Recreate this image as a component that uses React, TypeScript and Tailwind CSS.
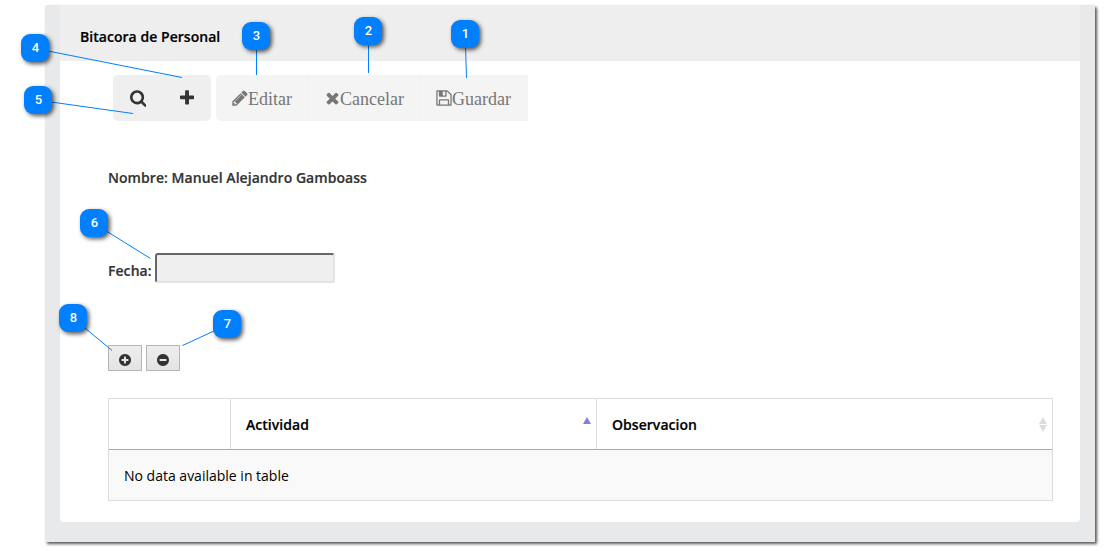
import React from 'react';

const ICONS = {
  search: {
    box: '64 0 1664 1792',
    d: 'M1216 832q0-185-131.5-316.5t-316.5-131.5-316.5 131.5-131.5 316.5 131.5 316.5 316.5 131.5 316.5-131.5 131.5-316.5zm512 832q0 52-38 90t-90 38q-54 0-90-38l-343-342q-179 124-399 124-143 0-273.5-55.5t-225-150-150-225-55.5-273.5 55.5-273.5 150-225 225-150 273.5-55.5 273.5 55.5 225 150 150 225 55.5 273.5q0 220-124 399l343 343q37 37 37 90z',
  },
  plus: {
    box: '192 0 1408 1792',
    d: 'M1600 736v192q0 40-28 68t-68 28h-416v416q0 40-28 68t-68 28h-192q-40 0-68-28t-28-68v-416h-416q-40 0-68-28t-28-68v-192q0-40 28-68t68-28h416v-416q0-40 28-68t68-28h192q40 0 68 28t28 68v416h416q40 0 68 28t28 68z',
  },
  pencil: {
    box: '128 0 1536 1792',
    d: 'M491 1536l91-91-235-235-91 91v107h128v128h107zm523-928q0-22-22-22-10 0-17 7l-542 542q-7 7-7 17 0 22 22 22 10 0 17-7l542-542q7-7 7-17zm-54-192l416 416-832 832h-416v-416zm683 96q0 53-37 90l-166 166-416-416 166-165q36-38 90-38 53 0 91 38l235 234q37 39 37 91z',
  },
  times: {
    box: '192 0 1408 1792',
    d: 'M1490 1322q0 40-28 68l-136 136q-28 28-68 28t-68-28l-294-294-294 294q-28 28-68 28t-68-28l-136-136q-28-28-28-68t28-68l294-294-294-294q-28-28-28-68t28-68l136-136q28-28 68-28t68 28l294 294 294-294q28-28 68-28t68 28l136 136q28 28 28 68t-28 68l-294 294 294 294q28 28 28 68z',
  },
  floppy: {
    box: '128 0 1536 1792',
    d: 'M512 1536h768v-384h-768v384zm896 0h128v-896q0-14-10-38.5t-20-34.5l-281-281q-10-10-34-20t-39-10v416q0 40-28 68t-68 28h-576q-40 0-68-28t-28-68v-416h-128v1280h128v-416q0-40 28-68t68-28h832q40 0 68 28t28 68v416zm-384-928v-320q0-13-9.5-22.5t-22.5-9.5h-192q-13 0-22.5 9.5t-9.5 22.5v320q0 13 9.5 22.5t22.5 9.5h192q13 0 22.5-9.5t9.5-22.5zm640 32v928q0 40-28 68t-68 28h-1344q-40 0-68-28t-28-68v-1344q0-40 28-68t68-28h928q40 0 88 20t76 48l280 280q28 28 48 76t20 88z',
  },
  plusCircle: {
    box: '128 0 1536 1792',
    d: 'M1344 960v-128q0-26-19-45t-45-19h-256v-256q0-26-19-45t-45-19h-128q-26 0-45 19t-19 45v256h-256q-26 0-45 19t-19 45v128q0 26 19 45t45 19h256v256q0 26 19 45t45 19h128q26 0 45-19t19-45v-256h256q26 0 45-19t19-45zm320-64q0 209-103 385.5t-279.5 279.5-385.5 103-385.5-103-279.5-279.5-103-385.5 103-385.5 279.5-279.5 385.5-103 385.5 103 279.5 279.5 103 385.5z',
  },
  minusCircle: {
    box: '128 0 1536 1792',
    d: 'M1344 960v-128q0-26-19-45t-45-19h-768q-26 0-45 19t-19 45v128q0 26 19 45t45 19h768q26 0 45-19t19-45zm320-64q0 209-103 385.5t-279.5 279.5-385.5 103-385.5-103-279.5-279.5-103-385.5 103-385.5 279.5-279.5 385.5-103 385.5 103 279.5 279.5 103 385.5z',
  },
};

function Icon({ name, className }: { name: keyof typeof ICONS; className: string }) {
  return (
    <svg viewBox={ICONS[name].box} className={className} fill="currentColor" aria-hidden="true">
      <path d={ICONS[name].d} />
    </svg>
  );
}

const CALLOUTS = [
  { n: 1, x: 451, y: 20, line: [465.5, 47, 466.5, 78] },
  { n: 2, x: 354, y: 17, line: [368.5, 44, 368.5, 73] },
  { n: 3, x: 242, y: 22, line: [256.5, 49, 256.5, 75] },
  { n: 4, x: 21, y: 34, line: [48, 51, 182, 77.5] },
  { n: 5, x: 24, y: 86, line: [51, 102, 133, 113.5] },
  { n: 6, x: 80, y: 209, line: [107, 231.5, 150.5, 258.5] },
  { n: 7, x: 213, y: 310, line: [214, 331, 182.5, 345.5] },
  { n: 8, x: 59, y: 304, line: [85, 328, 112, 350.5] },
];

export default function App() {
  return (
    <div className="relative h-[551px] w-[1104px] overflow-hidden bg-white px-[45px] pt-[5px] font-['Open_Sans',sans-serif] text-sm text-[#333]">
      <div className="h-[537px] w-[1050px] rounded-t-[2px] bg-[#e8e9eb] px-[15px] shadow-[2px_2px_3px_rgba(0,0,0,0.65)]">
        <main className="h-[517px] rounded-b bg-white">
          <header className="flex h-14 items-center bg-[#eee] pt-2 pl-5 font-semibold tracking-[0.04px] text-black [-webkit-text-stroke:0.2px]">
            Bitacora de Personal
          </header>

          <div className="flex gap-[5px] pt-3.5 pl-[53px]">
            <div className="flex h-[46px] w-[98px] rounded-[5px] bg-[#efefef]">
              <button className="flex w-[50px] items-center justify-center">
                <Icon name="search" className="h-[18px] w-[16.7px]" />
              </button>
              <button className="flex w-12 items-center justify-center pb-px">
                <Icon name="plus" className="h-[18px] w-[14.1px]" />
              </button>
            </div>
            <div className="flex h-[46px] w-[312px] rounded-l-[5px] bg-[#f4f4f4] font-['Liberation_Serif',serif] text-lg text-[#777]">
              <button className="flex w-[93px] items-center border-r border-[#f0f0f0] pl-4">
                <Icon name="pencil" className="h-[18px] w-4 shrink-0" />
                <span className="pt-px">Editar</span>
              </button>
              <button className="flex w-[111px] items-center border-r border-[#f0f0f0] pl-4">
                <Icon name="times" className="h-[18px] w-[15px] shrink-0" />
                <span className="pt-px">Cancelar</span>
              </button>
              <button className="flex w-[108px] items-center pl-4">
                <Icon name="floppy" className="h-[18px] w-4 shrink-0" />
                <span className="pt-px">Guardar</span>
              </button>
            </div>
          </div>

          <div className="px-12">
            <p className="mt-[47px] font-semibold tracking-[0.05px] [-webkit-text-stroke:0.2px]">
              Nombre: Manuel Alejandro Gamboass
            </p>
            <label className="mt-[65px] flex font-semibold tracking-[0.05px] [-webkit-text-stroke:0.2px]">
              <span className="w-[47px] pt-2">Fecha:</span>
              <input className="h-[30px] w-[180px] rounded-[3px] border-2 border-t-[#666] border-r-[#e3e3e3] border-b-[#e3e3e3] border-l-[#666] bg-[#efefef]" />
            </label>
            <div className="mt-[62px] flex gap-1">
              <button className="flex h-[26px] w-[34px] items-center justify-center border border-[#b6b6b6] bg-linear-to-b from-[#eee] to-[#e3e3e3] pt-[3px]">
                <Icon name="plusCircle" className="h-3.5 w-3" />
              </button>
              <button className="flex h-[26px] w-[34px] items-center justify-center border border-[#b6b6b6] bg-linear-to-b from-[#eee] to-[#e3e3e3] pt-[3px]">
                <Icon name="minusCircle" className="h-3.5 w-3" />
              </button>
            </div>

            <div className="mt-[27px] w-[945px] border border-[#ddd] text-black">
              <div className="flex h-[51px] border-b border-[#aaa] font-semibold tracking-[0.04px] [-webkit-text-stroke:0.2px]">
                <div className="w-[122px] border-r border-[#ddd]" />
                <div className="flex w-[366px] items-center justify-between border-r border-[#ddd] pr-[5.5px] pl-[15px]">
                  <span className="pt-0.5">Actividad</span>
                  <svg className="mb-2 h-[7px] w-2 fill-[#7c80df]" viewBox="0 0 8 7">
                    <path d="M4 0 8 7H0z" />
                  </svg>
                </div>
                <div className="flex flex-1 items-center justify-between pr-[5.5px] pl-[15px]">
                  <span className="pt-0.5">Observacion</span>
                  <svg className="h-[15px] w-2 fill-[#dcdcdc]" viewBox="0 0 8 15">
                    <path d="M4 0 8 7H0zM0 8H8L4 15z" />
                  </svg>
                </div>
              </div>
              <div className="flex h-[50px] items-center bg-[#f9f9f9] pt-0.5 pl-[15px]">No data available in table</div>
            </div>
          </div>
        </main>
      </div>

      <svg className="pointer-events-none absolute inset-0 h-full w-full" viewBox="0 0 1104 551">
        {CALLOUTS.map(({ n, line }) => (
          <line key={n} x1={line[0]} y1={line[1]} x2={line[2]} y2={line[3]} stroke="#0080ff" strokeWidth="1" />
        ))}
      </svg>
      {CALLOUTS.map(({ n, x, y }) => (
        <span
          key={n}
          style={{ left: x, top: y }}
          className="absolute flex size-7 items-center justify-center rounded-[9px] bg-[#0080ff] pl-px font-['Roboto',sans-serif] text-[13px] font-medium text-white shadow-[2px_2px_4px_rgba(0,0,0,0.65)]"
        >
          {n}
        </span>
      ))}
    </div>
  );
}
